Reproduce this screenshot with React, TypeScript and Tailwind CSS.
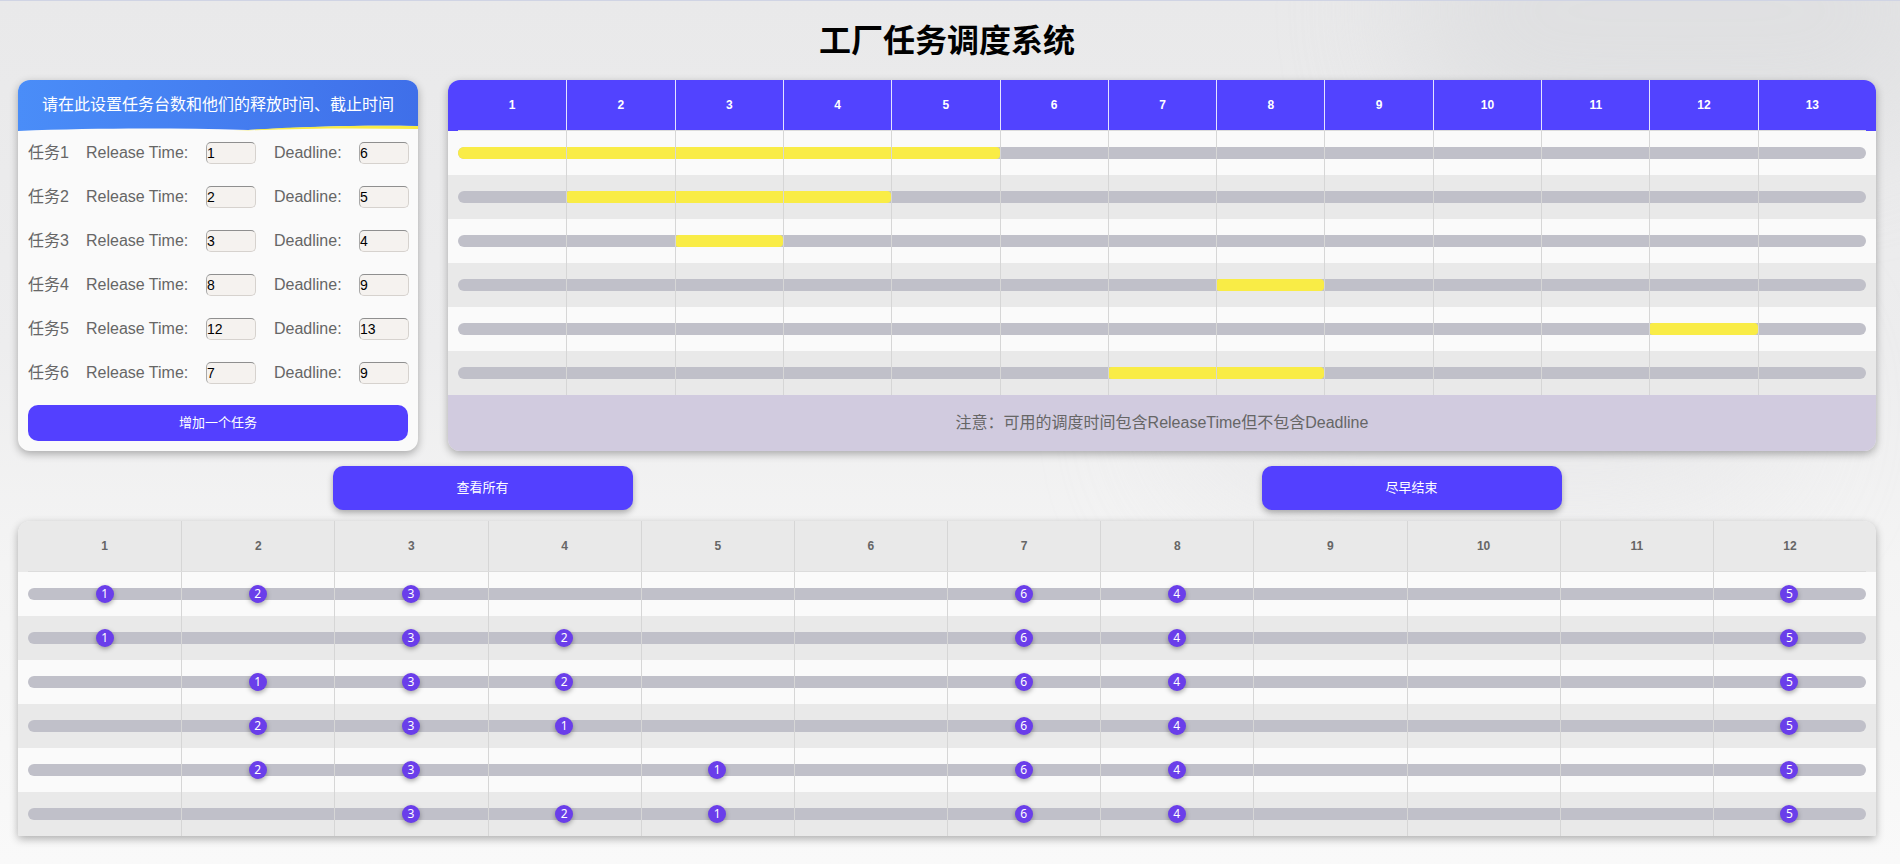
import React from "react";

const tasks = [
  { release: 1, deadline: 6 },
  { release: 2, deadline: 5 },
  { release: 3, deadline: 4 },
  { release: 8, deadline: 9 },
  { release: 12, deadline: 13 },
  { release: 7, deadline: 9 },
];

// [task, slot] pairs for every valid schedule
const schedules: [number, number][][] = [
  [[1, 1], [2, 2], [3, 3], [6, 7], [4, 8], [5, 12]],
  [[1, 1], [3, 3], [2, 4], [6, 7], [4, 8], [5, 12]],
  [[1, 2], [3, 3], [2, 4], [6, 7], [4, 8], [5, 12]],
  [[2, 2], [3, 3], [1, 4], [6, 7], [4, 8], [5, 12]],
  [[2, 2], [3, 3], [1, 5], [6, 7], [4, 8], [5, 12]],
  [[3, 3], [2, 4], [1, 5], [6, 7], [4, 8], [5, 12]],
];

const slots13 = Array.from({ length: 13 }, (_, i) => i + 1);
const slots12 = Array.from({ length: 12 }, (_, i) => i + 1);

function TaskForm() {
  return (
    <div className="w-[400px] h-[371px] shrink-0 rounded-[12px] bg-[#fafafa] shadow-[0_3px_8px_rgba(0,0,0,0.3)] overflow-hidden flex flex-col">
      <div className="relative h-[51px] shrink-0 bg-[linear-gradient(90deg,#4a8df8,#3f6fe9)] flex items-center justify-center pb-[2px] text-white text-[16px]">
        请在此设置任务台数和他们的释放时间、截止时间
        <svg className="absolute left-0 bottom-0" width="400" height="8" viewBox="0 0 400 8">
          <path d="M0,8 C80,5 150,5 230,7 C300,3 350,2 400,3 L400,8 Z" fill="#fafafa" />
          <path d="M215,8 C280,3 345,2 400,3 L400,6 C340,5 280,5 215,8 Z" fill="#f8ec45" />
        </svg>
      </div>
      {tasks.map((t, i) => (
        <div key={i} className="h-[44px] shrink-0 flex items-center pl-[10px] text-[16px] text-[#666]">
          <span className="w-[58px]">任务{i + 1}</span>
          <span className="w-[120px]">Release Time:</span>
          <input
            defaultValue={t.release}
            className="w-[50px] h-[22px] bg-[#f5f2ef] border border-[#d6d2ce] border-t-[#8f8f8f] border-l-[#a8a8a8] rounded-[5px] text-[14px] text-black pl-0 outline-none"
          />
          <span className="w-[85px] ml-[18px]">Deadline:</span>
          <input
            defaultValue={t.deadline}
            className="w-[50px] h-[22px] bg-[#f5f2ef] border border-[#d6d2ce] border-t-[#8f8f8f] border-l-[#a8a8a8] rounded-[5px] text-[14px] text-black pl-0 outline-none"
          />
        </div>
      ))}
      <button className="mt-[10px] mx-[10px] h-[36px] shrink-0 rounded-[10px] bg-[#5340ff] text-white text-[13px]">
        增加一个任务
      </button>
    </div>
  );
}

function Timeline() {
  return (
    <div className="flex-1 h-[371px] rounded-[12px] overflow-hidden shadow-[0_3px_8px_rgba(0,0,0,0.3)] flex flex-col">
      <div className="bg-[#5243ff] h-[51px] px-[10px]">
        <div className="grid grid-cols-[repeat(13,minmax(0,1fr))] h-[51px] border-b border-[#dcdcdc]">
          {slots13.map((n) => (
            <div
              key={n}
              className={`flex items-center justify-center text-white text-[12px] font-bold ${n > 1 ? "border-l border-[#e4e4ff]" : ""}`}
            >
              {n}
            </div>
          ))}
        </div>
      </div>
      <div className="grid">
        <div className="[grid-area:1/1] flex flex-col">
          {tasks.map((t, i) => (
            <div key={i} className={`h-[44px] px-[10px] flex items-center ${i % 2 ? "bg-[#e9e9e9]" : "bg-[#fafafa]"}`}>
              <div className="w-full h-[12px] rounded-full overflow-hidden bg-[#c0c0c9] grid grid-cols-[repeat(13,minmax(0,1fr))]">
                <div
                  className="bg-[#f9ec46] rounded-[4px]"
                  style={{ gridColumn: `${t.release} / ${t.deadline}` }}
                />
              </div>
            </div>
          ))}
        </div>
        <div className="[grid-area:1/1] mx-[10px] grid grid-cols-[repeat(13,minmax(0,1fr))] pointer-events-none">
          {slots13.map((n) => (
            <div key={n} className={n > 1 ? "border-l border-[#d6d6d6]" : ""} />
          ))}
        </div>
      </div>
      <div className="flex-1 bg-[#d1cbdf] flex items-center justify-center text-[16px] text-[#666]">
        注意：可用的调度时间包含ReleaseTime但不包含Deadline
      </div>
    </div>
  );
}

function Results() {
  return (
    <div className="rounded-t-[12px] rounded-b-[2px] overflow-hidden shadow-[0_3px_8px_rgba(0,0,0,0.3)]">
      <div className="bg-[#e9e9e9] h-[51px] px-[10px]">
        <div className="grid grid-cols-[repeat(12,minmax(0,1fr))] h-[51px] border-b border-[#dcdcdc]">
          {slots12.map((n) => (
            <div
              key={n}
              className={`flex items-center justify-center text-[#666] text-[12px] font-bold ${n > 1 ? "border-l border-[#d6d6d6]" : ""}`}
            >
              {n}
            </div>
          ))}
        </div>
      </div>
      <div className="grid">
        <div className="[grid-area:1/1] flex flex-col">
          {schedules.map((s, i) => (
            <div key={i} className={`h-[44px] px-[10px] flex items-center ${i % 2 ? "bg-[#e9e9e9]" : "bg-[#fafafa]"}`}>
              <div className="w-full grid items-center">
                <div className="[grid-area:1/1] h-[12px] rounded-full bg-[#c0c0c9]" />
                <div className="[grid-area:1/1] relative z-10 grid grid-cols-[repeat(12,minmax(0,1fr))]">
                  {s.map(([task, slot]) => (
                    <div key={task} className="flex justify-center" style={{ gridColumn: `${slot}` }}>
                      <span className="w-[18px] h-[18px] rounded-full bg-[#6a3eea] text-white text-[12px] leading-[17px] text-center shadow-[0_2px_5px_rgba(0,0,0,0.35)] font-['Noto_Sans',sans-serif]">
                        {task}
                      </span>
                    </div>
                  ))}
                </div>
              </div>
            </div>
          ))}
        </div>
        <div className="[grid-area:1/1] mx-[10px] grid grid-cols-[repeat(12,minmax(0,1fr))] pointer-events-none">
          {slots12.map((n) => (
            <div key={n} className={n > 1 ? "border-l border-[#d6d6d6]" : ""} />
          ))}
        </div>
      </div>
    </div>
  );
}

export default function App() {
  return (
    <div className="relative min-h-[864px] overflow-hidden border-t border-[#d0d4e4] bg-[linear-gradient(180deg,#e9e9ea_0%,#ededee_40%,#f4f4f4_65%,#f9f9f9_100%)] font-['Liberation_Sans','Noto_Sans_CJK_SC',sans-serif]">
      <div className="pointer-events-none absolute -top-[120px] right-[-60px] w-[560px] h-[260px] rounded-full bg-[#d9dadc] blur-[60px] opacity-60" />
      <div className="pointer-events-none absolute top-[320px] right-[120px] w-[600px] h-[180px] rounded-full bg-[#e4e4e6] blur-[70px] opacity-60" />
      <div className="relative pl-[18px] pr-[24px]">
        <h1 className="pt-[13px] h-[79px] leading-[48px] text-center text-[32px] font-bold text-black font-['Noto_Sans_CJK_SC',sans-serif]">
          工厂任务调度系统
        </h1>
        <div className="flex items-start gap-[30px]">
          <TaskForm />
          <Timeline />
        </div>
        <div className="flex justify-around mt-[15px] mb-[11px]">
          <button className="w-[300px] h-[44px] rounded-[10px] bg-[#5340ff] text-white text-[13px] shadow-[0_3px_6px_rgba(0,0,0,0.3)]">
            查看所有
          </button>
          <button className="w-[300px] h-[44px] rounded-[10px] bg-[#5340ff] text-white text-[13px] shadow-[0_3px_6px_rgba(0,0,0,0.3)]">
            尽早结束
          </button>
        </div>
        <Results />
      </div>
    </div>
  );
}
